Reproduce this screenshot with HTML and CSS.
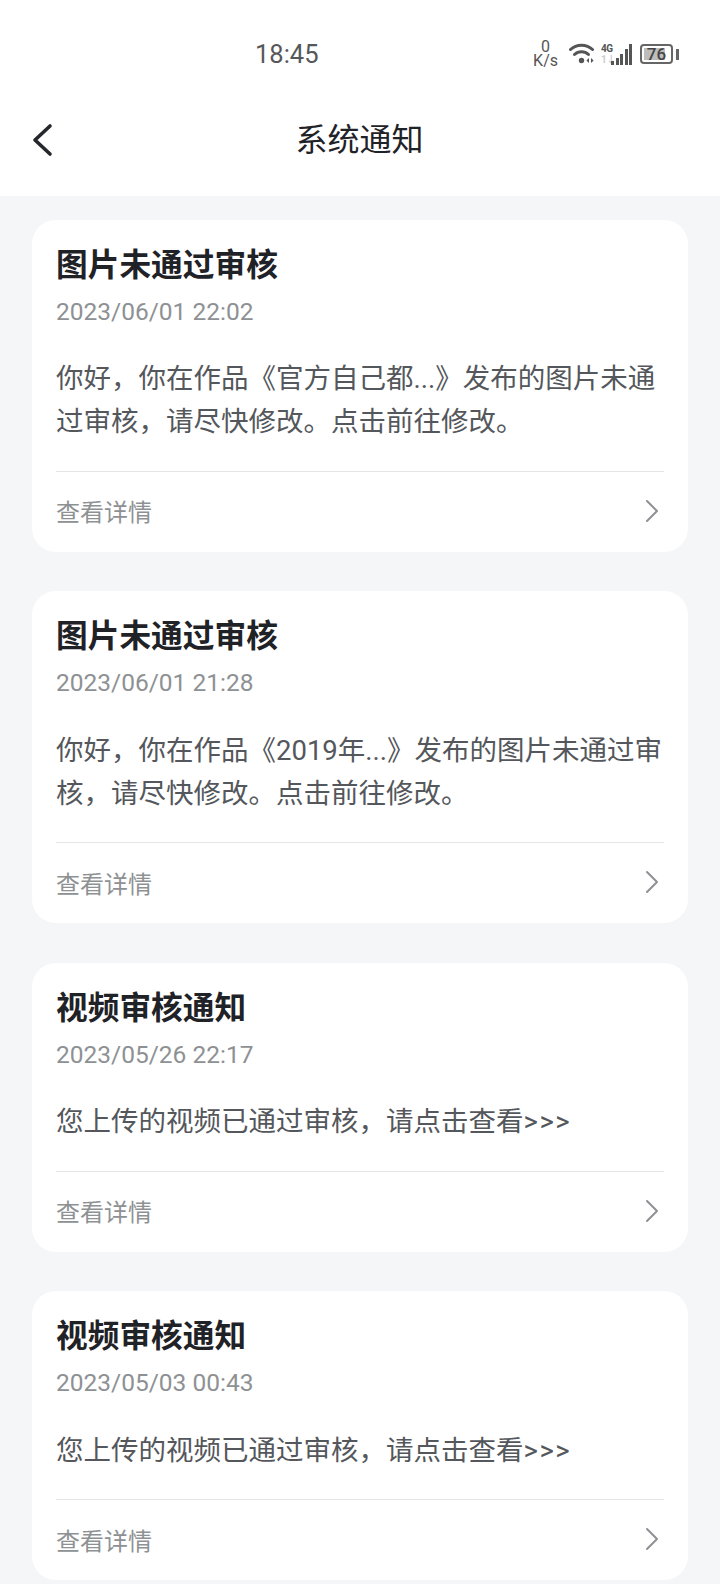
FILE: index.html
```html
<!DOCTYPE html>
<html lang="zh-CN">
<head>
    <meta charset="UTF-8">
    <meta name="viewport" content="width=device-width, initial-scale=1.0">
    <title>系统通知</title>
    <link rel="stylesheet" href="styles.css">
</head>
<body>
    <header class="top">
        <div class="status">
            <span class="time">18:45</span>
            <div class="status-icons">
                <span class="speed">0<br>K/s</span>
                <svg class="wifi" width="26" height="22" viewBox="0 0 26 22" fill="none" stroke="#555" stroke-linecap="round">
                    <path d="M1.5 6.5C7.5 .8 17.5 .8 23.5 6.5" stroke-width="3"/>
                    <path d="M5.5 11.5C9.5 7.8 15.5 7.8 19.5 11.5" stroke-width="3"/>
                    <circle cx="12.5" cy="17.5" r="2.7" fill="#555" stroke="none"/>
                    <path d="M20 15v5l-2.6-2.5zM22 15v5l2.6-2.5z" fill="#555" stroke="none"/>
                </svg>
                <div class="net">
                    <span class="net-label">4G</span>
                    <span class="net-dim">1↓</span>
                </div>
                <div class="bars">
                    <i class="b1"></i><i class="b2"></i><i class="b3"></i><i class="b4"></i><i class="b5"></i>
                </div>
                <div class="battery">
                    <div class="battery-body"><span class="battery-fill"></span><span class="battery-num">76</span></div>
                    <span class="battery-cap"></span>
                </div>
            </div>
        </div>
        <nav class="nav">
            <svg class="back" width="24" height="36" viewBox="0 0 24 36" fill="none" stroke="#24272b" stroke-width="3.6" stroke-linecap="round" stroke-linejoin="round">
                <path d="M19 4L4 18L19 32"/>
            </svg>
            <h1>系统通知</h1>
        </nav>
    </header>

    <main class="list">
        <section class="card">
            <h3>图片未通过审核</h3>
            <p class="date">2023/06/01 22:02</p>
            <p class="msg">你好，你在作品《官方自己都...》发布的图片未通过审核，请尽快修改。点击前往修改。</p>
            <div class="more">
                <span>查看详情</span>
                <svg width="14" height="24" viewBox="0 0 14 24" fill="none" stroke="#8e9194" stroke-width="2" stroke-linecap="round" stroke-linejoin="round"><path d="M2 2L12 12L2 22"/></svg>
            </div>
        </section>
        <section class="card">
            <h3>图片未通过审核</h3>
            <p class="date">2023/06/01 21:28</p>
            <p class="msg">你好，你在作品《2019年...》发布的图片未通过审核，请尽快修改。点击前往修改。</p>
            <div class="more">
                <span>查看详情</span>
                <svg width="14" height="24" viewBox="0 0 14 24" fill="none" stroke="#8e9194" stroke-width="2" stroke-linecap="round" stroke-linejoin="round"><path d="M2 2L12 12L2 22"/></svg>
            </div>
        </section>
        <section class="card">
            <h3>视频审核通知</h3>
            <p class="date">2023/05/26 22:17</p>
            <p class="msg">您上传的视频已通过审核，请点击查看<span class="arrows">&gt;&gt;&gt;</span></p>
            <div class="more">
                <span>查看详情</span>
                <svg width="14" height="24" viewBox="0 0 14 24" fill="none" stroke="#8e9194" stroke-width="2" stroke-linecap="round" stroke-linejoin="round"><path d="M2 2L12 12L2 22"/></svg>
            </div>
        </section>
        <section class="card">
            <h3>视频审核通知</h3>
            <p class="date">2023/05/03 00:43</p>
            <p class="msg">您上传的视频已通过审核，请点击查看<span class="arrows">&gt;&gt;&gt;</span></p>
            <div class="more">
                <span>查看详情</span>
                <svg width="14" height="24" viewBox="0 0 14 24" fill="none" stroke="#8e9194" stroke-width="2" stroke-linecap="round" stroke-linejoin="round"><path d="M2 2L12 12L2 22"/></svg>
            </div>
        </section>
    </main>
</body>
</html>
```

FILE: styles.css
```css
* {
    box-sizing: border-box;
}
html, body {
    height: 1584px;
    overflow: hidden;
}
body {
    margin: 0;
    font-family: Roboto, "Noto Sans CJK SC", sans-serif;
    background-color: #f5f6f8;
    color: #1f2226;
}
.top {
    height: 196px;
    background-color: #fff;
}
.status {
    height: 100px;
    display: flex;
    align-items: center;
    padding: 8px 41px 0 255px;
    justify-content: space-between;
}
.time {
    font-size: 25.5px;
    color: #55585b;
}
.status-icons {
    display: flex;
    align-items: center;
    color: #555;
}
.speed {
    font-size: 16px;
    line-height: 14px;
    text-align: center;
    margin-right: 11px;
}
.net {
    display: flex;
    flex-direction: column;
    margin-left: 6px;
    width: 10px;
    font-size: 10px;
    line-height: 11px;
    font-weight: bold;
    letter-spacing: -0.5px;
    white-space: nowrap;
}
.net-dim {
    color: #ccc;
}
.bars {
    display: flex;
    align-items: flex-end;
    gap: 1.5px;
    height: 21px;
    margin-right: 8px;
}
.bars i {
    display: block;
    width: 3px;
    background-color: #555;
}
.b1 { height: 4px; }
.b2 { height: 7px; }
.b3 { height: 11px; }
.b4 { height: 16px; }
.b5 { height: 21px; }
.battery {
    display: flex;
    align-items: center;
    gap: 3px;
}
.battery-body {
    position: relative;
    width: 33px;
    height: 20px;
    border: 2px solid #666;
    border-radius: 4px;
    padding: 2px;
}
.battery-fill {
    display: block;
    width: 84%;
    height: 100%;
    background-color: #bdbdbd;
}
.battery-num {
    position: absolute;
    left: 0;
    right: 0;
    top: -1px;
    text-align: center;
    font-size: 17px;
    line-height: 19px;
    font-weight: 500;
    color: #444;
}
.battery-cap {
    width: 3px;
    height: 11px;
    background-color: #666;
}
.nav {
    position: relative;
    height: 96px;
    display: flex;
    align-items: center;
    justify-content: center;
}
.back {
    position: absolute;
    left: 31px;
    top: 22px;
}
.nav h1 {
    margin: 0 0 0 -1px;
    font-size: 32px;
    font-weight: 400;
    position: relative;
    top: -11px;
}
.list {
    padding: 23.5px 32px 0;
    display: flex;
    flex-direction: column;
    gap: 39.5px;
}
.card {
    background-color: #fff;
    border-radius: 24px;
    padding: 22px 24px 0;
}
.card h3 {
    margin: 0;
    font-size: 31.7px;
    line-height: 48px;
    font-weight: 700;
}
.date {
    margin: 2px 0 0;
    font-size: 24.5px;
    line-height: 40px;
    color: #8e9194;
}
.msg {
    margin: 25.5px 0 0;
    font-size: 27.5px;
    line-height: 43px;
    color: #54575b;
}
.arrows {
    letter-spacing: 1.5px;
}
.more {
    margin-top: 27.5px;
    height: 81px;
    padding: 0 5px 2px 0;
    border-top: 1px solid #e4e5e7;
    display: flex;
    align-items: center;
    justify-content: space-between;
    font-size: 24px;
    color: #8e9194;
}
```
